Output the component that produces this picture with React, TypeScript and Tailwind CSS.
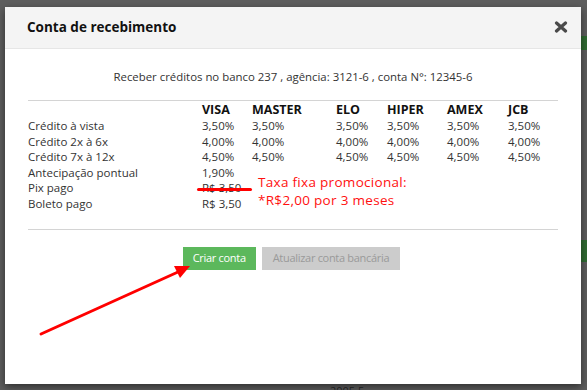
const rows = [
  { label: 'Crédito à vista', values: ['3,50%', '3,50%', '3,50%', '3,50%', '3,50%', '3,50%'] },
  { label: 'Crédito 2x à 6x', values: ['4,00%', '4,00%', '4,00%', '4,00%', '4,00%', '4,00%'] },
  { label: 'Crédito 7x à 12x', values: ['4,50%', '4,50%', '4,50%', '4,50%', '4,50%', '4,50%'] },
  { label: 'Antecipação pontual', values: ['1,90%', '', '', '', '', ''] },
  { label: 'Pix pago', values: ['R$ 3,50', '', '', '', '', ''] },
  { label: 'Boleto pago', values: ['R$ 3,50', '', '', '', '', ''] },
]

const brands = ['VISA', 'MASTER', 'ELO', 'HIPER', 'AMEX', 'JCB']

export default function App() {
  return (
    <div
      className="relative w-[587px] h-[390px] overflow-hidden bg-[#5e5e5e] pt-[7px] pl-[5px]"
      style={{ fontFamily: '"Open Sans", "Noto Sans", sans-serif' }}
    >
      {/* faint page content behind the overlay */}
      <div className="absolute right-0 top-[36px] w-[6px] h-[14px] bg-[#2f6b32]" />
      <div className="absolute right-0 top-[240px] w-[6px] h-[22px] bg-[#2f6b32]" />
      <div className="absolute left-[330px] top-[385px] text-[11px] leading-none text-[#2a2a2a]">2005 5</div>

      <div className="relative w-[576px] h-[377px] bg-white shadow-[0_3px_8px_rgba(0,0,0,0.5)]">
        {/* Header */}
        <div className="h-[42px] bg-[#f4f4f4] border-b border-[#e6e6e6] flex items-center justify-between pl-[22px] pr-[13px]">
          <h4 className="text-[13.5px] font-bold text-[#111]">Conta de recebimento</h4>
          <svg width="14" height="12" viewBox="0 0 14 12" className="mt-[-2px]">
            <path d="M2.5 2 L11.5 10 M11.5 2 L2.5 10" stroke="#4a4a4a" strokeWidth="3.2" strokeLinecap="round" />
          </svg>
        </div>

        {/* Body */}
        <div className="px-[23px]">
          <p className="pt-[20px] text-center text-[11.4px] leading-[16px] text-[#333]">
            Receber créditos no banco 237 , agência: 3121-6 , conta N°: 12345-6
          </p>

          <div className="mt-[15px] border-t border-[#d4d4d4]" />

          <div className="relative pt-[1px]">
            <div className="grid grid-cols-[174px_50px_84px_51px_60px_61px_1fr] text-[11.5px] leading-[15.6px] text-[#333]">
              <div />
              {brands.map((b) => (
                <div key={b} className="text-[12.5px] font-bold text-[#111] leading-[16px]">
                  {b}
                </div>
              ))}
              {rows.map((r) => (
                <>
                  <div key={r.label}>{r.label}</div>
                  {r.values.map((v, i) => (
                    <div key={r.label + i}>{v}</div>
                  ))}
                </>
              ))}
            </div>

            {/* strike over Pix value */}
            <div className="absolute left-[169px] top-[87px] w-[55px] h-[3px] rounded-full bg-[#ff0000]" />

            {/* promo note */}
            <div className="absolute left-[230px] top-[72px] text-[13.5px] leading-[18px] tracking-[0.3px] text-[#ff1010]">
              <div>Taxa fixa promocional:</div>
              <div>*R$2,00 por 3 meses</div>
            </div>
          </div>

          <div className="mt-[17px] border-t border-[#d4d4d4]" />

          <div className="mt-[17px] flex justify-center gap-[6px] pr-[3px]">
            <button className="h-[23px] px-[10px] bg-[#5cb85c] text-white text-[11px] tracking-[-0.3px]">
              Criar conta
            </button>
            <button className="h-[23px] px-[11px] bg-[#cccccc] text-[#9a9a9a] text-[11px] tracking-[-0.3px]">
              Atualizar conta bancária
            </button>
          </div>
        </div>
      </div>

      {/* arrow annotation */}
      <svg className="absolute left-0 top-0" width="587" height="390" viewBox="0 0 587 390">
        <line x1="41" y1="334" x2="178" y2="272" stroke="#ff0000" strokeWidth="3" strokeLinecap="round" />
        <polygon points="190,266 174,266 180,278" fill="#ff0000" />
      </svg>
    </div>
  )
}
